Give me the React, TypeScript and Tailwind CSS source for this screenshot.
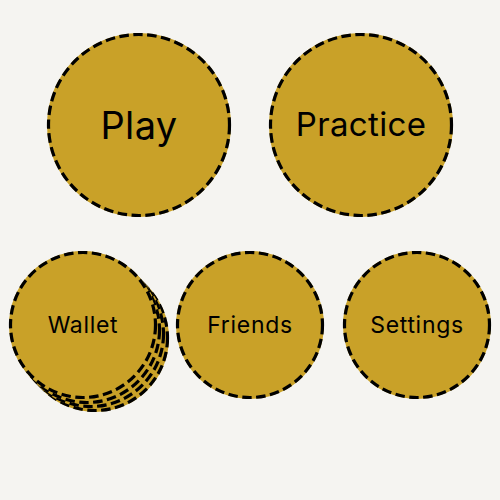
const Ring = () => {
    return (
        <svg className="absolute inset-0 w-full h-full overflow-visible" fill="none">
            <circle cx="50%" cy="50%" r="calc(50% - 1.5px)" stroke="black" strokeWidth="3.2" strokeDasharray="9.5 4.5" />
        </svg>
    )
}

const Circle = ({ label, size, text }: { label: string; size: string; text: string }) => {
    return (
        <button
            type="button"
            className={`${size} relative shrink-0 rounded-full bg-[#c9a128] flex items-center justify-center text-black ${text}`}
        >
            <Ring />
            <span className="relative">{label}</span>
        </button>
    )
}

const Back = ({ pos }: { pos: string }) => {
    return (
        <div className={`absolute ${pos} w-[148px] h-[148px] rounded-full bg-[#c9a128]`}>
            <Ring />
        </div>
    )
}

const WalletStack = () => {
    return (
        <div className="relative w-[148px] h-[148px] shrink-0">
            <Back pos="left-[12px] top-[13px]" />
            <Back pos="left-[8px] top-[9px]" />
            <Back pos="left-[4px] top-[5px]" />
            <Circle label="Wallet" size="w-[148px] h-[148px]" text="text-[23px] tracking-[0.03em]" />
        </div>
    )
}

export default function App() {
    return (
        <div className="w-[500px] h-[500px] bg-[#f5f4f1] flex flex-col items-center pt-[33px] font-['Inter',sans-serif]">
            <div className="flex gap-[38px]">
                <Circle label="Play" size="w-[184px] h-[184px]" text="text-[38px] tracking-[0.01em]" />
                <Circle label="Practice" size="w-[184px] h-[184px]" text="text-[33px] tracking-[0.01em]" />
            </div>
            <div className="mt-[34px] flex gap-[19px]">
                <WalletStack />
                <Circle label="Friends" size="w-[148px] h-[148px]" text="text-[23px] tracking-[0.03em]" />
                <Circle label="Settings" size="w-[148px] h-[148px]" text="text-[23px] tracking-[0.03em]" />
            </div>
        </div>
    )
}
